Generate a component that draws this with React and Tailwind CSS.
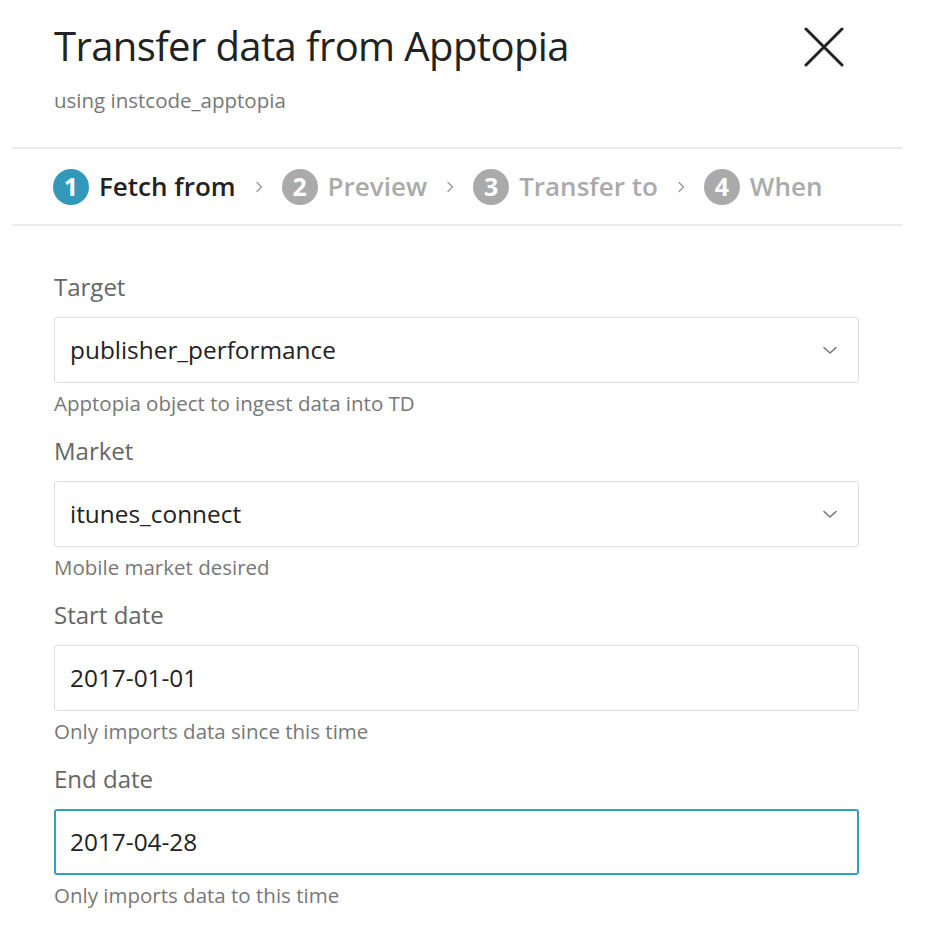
import React from 'react';

const STEPS = [
  { n: 1, label: 'Fetch from', active: true },
  { n: 2, label: 'Preview' },
  { n: 3, label: 'Transfer to' },
  { n: 4, label: 'When' },
];

const FIELDS = [
  { label: 'Target', value: 'publisher_performance', help: 'Apptopia object to ingest data into TD', select: true },
  { label: 'Market', value: 'itunes_connect', help: 'Mobile market desired', select: true },
  { label: 'Start date', value: '2017-01-01', help: 'Only imports data since this time' },
  { label: 'End date', value: '2017-04-28', help: 'Only imports data to this time', focused: true },
];

function Chevron({ className }) {
  return (
    <svg className={className} width="14" height="14" viewBox="0 0 14 14" fill="none">
      <path d="M5 2.5 9.5 7 5 11.5" stroke="currentColor" strokeWidth="1.4" strokeLinecap="round" strokeLinejoin="round" />
    </svg>
  );
}

function Field({ label, value, help, select, focused }) {
  return (
    <div className="mt-[18px] first:mt-[45px]">
      <div className="text-[24px] leading-[32px] text-[#666]">{label}</div>
      <div
        className={`mt-[14px] h-[66px] rounded-[3px] flex items-center justify-between bg-white ${
          focused ? 'border-2 border-[#3a9cc0] pl-[14px] pr-[19px]' : 'border border-[#dedede] pl-[15px] pr-[20px]'
        }`}
      >
        <span className="text-[24.4px] text-[#222]">{value}</span>
        {select && (
          <svg width="16" height="10" viewBox="0 0 16 10" fill="none" className="text-[#777]">
            <path d="M2 2.5 8 8l6-5.5" stroke="currentColor" strokeWidth="1.6" strokeLinecap="round" strokeLinejoin="round" />
          </svg>
        )}
      </div>
      <div className="mt-[6px] text-[20.5px] leading-[28px] text-[#777]">{help}</div>
    </div>
  );
}

export default function App() {
  return (
    <div className="w-[928px] h-[936px] bg-white font-['Open_Sans',sans-serif] overflow-hidden">
      {/* Header */}
      <div className="flex justify-between pl-[54px] pr-[84px] pt-[22px]">
        <div>
          <h1 className="text-[40px] leading-[48px] text-[#222] tracking-[-0.6px]">Transfer data from Apptopia</h1>
          <p className="mt-[16px] text-[20.5px] leading-[28px] text-[#777]">using instcode_apptopia</p>
        </div>
        <svg width="40" height="40" viewBox="0 0 40 40" className="mt-[5px] text-[#222]">
          <path d="M2 2 38 38M38 2 2 38" stroke="currentColor" strokeWidth="3" strokeLinecap="round" />
        </svg>
      </div>

      {/* Stepper */}
      <div className="mx-[12px] w-[890px] mt-[33px] border-t-2 border-b-2 border-[#ebebeb] h-[79px] flex items-center pl-[41px]">
        {STEPS.map((s, i) => (
          <div key={s.n} className="flex items-center">
            {i > 0 && <Chevron className="mx-[16px] text-[#999]" />}
            <span
              className={`w-[36px] h-[36px] rounded-full flex items-center justify-center text-white text-[25px] leading-none font-bold ${
                s.active ? 'bg-[#3399bb]' : 'bg-[#aaa]'
              }`}
            >
              {s.n}
            </span>
            <span className={`ml-[10px] text-[26px] font-semibold ${s.active ? 'text-[#222]' : 'text-[#aaa]'}`}>
              {s.label}
            </span>
          </div>
        ))}
      </div>

      {/* Form */}
      <div className="pl-[54px] pr-[69px]">
        {FIELDS.map((f) => (
          <Field key={f.label} {...f} />
        ))}
      </div>
    </div>
  );
}
